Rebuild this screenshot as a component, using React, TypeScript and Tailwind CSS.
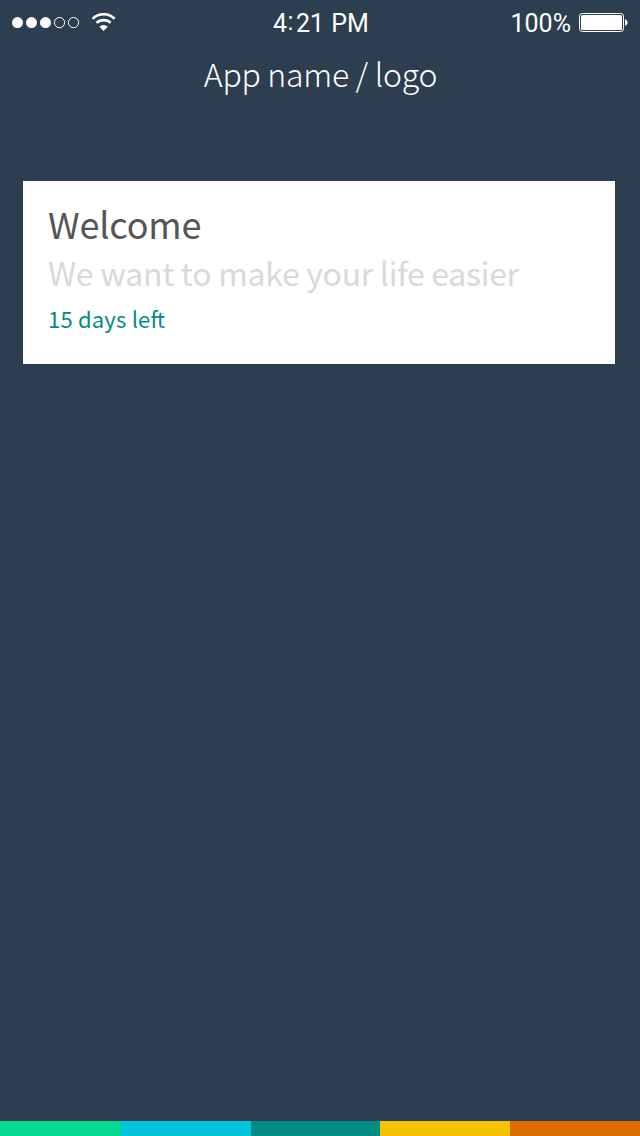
const sans = "font-['Noto_Sans_CJK_SC','Open_Sans',sans-serif]";

const stripes = [
  "w-[121px] bg-[#04d991]",
  "w-[130px] bg-[#03c4db]",
  "w-[129px] bg-[#028b86]",
  "w-[130px] bg-[#f5c303]",
  "w-[130px] bg-[#dd6e02]",
];

function Signal() {
  return (
    <svg width="68" height="12" viewBox="0 0 68 12" className="block">
      {[5.5, 19.5, 33.5].map((cx) => (
        <circle key={cx} cx={cx} cy="5.6" r="5.5" fill="#fff" />
      ))}
      {[47.5, 61.5].map((cx) => (
        <circle key={cx} cx={cx} cy="5.6" r="5.1" fill="none" stroke="#fff" />
      ))}
    </svg>
  );
}

function Wifi() {
  return (
    <svg width="25" height="19" viewBox="0 0 25 19" className="block">
      <g fill="none" stroke="#fff" strokeWidth="2.7">
        <path d="M.6 5.8a15.6 15.6 0 0 1 22 0" />
        <path d="M4.6 9.9a10 10 0 0 1 14 0" />
      </g>
      <path d="M11.6 18 7.4 13.8a6 6 0 0 1 8.4 0Z" fill="#fff" />
    </svg>
  );
}

function Battery() {
  return (
    <svg width="49" height="19" viewBox="0 0 49 19" className="block">
      <rect x=".5" y=".5" width="44" height="18" rx="2.8" fill="none" stroke="#fff" />
      <rect x="2" y="2" width="41" height="15" rx="1.5" fill="#fff" />
      <path d="M46 6.3c1.4.4 2.6 1.6 2.6 3.2s-1.2 2.8-2.6 3.2Z" fill="#fff" />
    </svg>
  );
}

export default function App() {
  return (
    <div className={`flex h-[1136px] w-[640px] flex-col overflow-hidden bg-[#2d3e50] ${sans}`}>
      <div className="grid h-[45px] grid-cols-3 items-center px-3 font-['Roboto',Arial,sans-serif] text-[25px] leading-[30px] text-white">
        <div className="flex items-center gap-[12px]">
          <Signal />
          <Wifi />
        </div>
        <div className="whitespace-nowrap pl-[2px] pt-[1px] text-center">
          4
          <span className="mr-[2px] inline-block -translate-y-[2px] font-['Liberation_Sans',sans-serif]">:</span>
          21<span className="ml-[1px]"> PM</span>
        </div>
        <div className="flex items-center justify-end gap-[8px]">
          <span className="pt-[2px]">100%</span>
          <Battery />
        </div>
      </div>
      <h1 className="mt-1 h-12 pl-[1px] text-center text-[32px] font-light leading-[48px] tracking-[-0.28px] text-white">
        App name / logo
      </h1>
      <main className="ml-[23px] mt-[84px] h-[183px] w-[592px] bg-white pl-[25px] pt-[18px]">
        <h2 className="text-[36px] font-normal leading-[49px] tracking-[-0.15px] text-[#555555]">Welcome</h2>
        <p className="text-[32px] leading-[48px] tracking-[-0.28px] text-[#d9d9d9]">
          We want to make your life easier
        </p>
        <p className="mt-[2px] text-[22px] leading-[40px] tracking-[0.2px] text-[#048b82]">
          15 days lef<span className="-ml-[1px]">t</span>
        </p>
      </main>
      <footer className="mt-auto flex h-[15px]">
        {stripes.map((stripe) => (
          <div key={stripe} className={stripe} />
        ))}
      </footer>
    </div>
  );
}
